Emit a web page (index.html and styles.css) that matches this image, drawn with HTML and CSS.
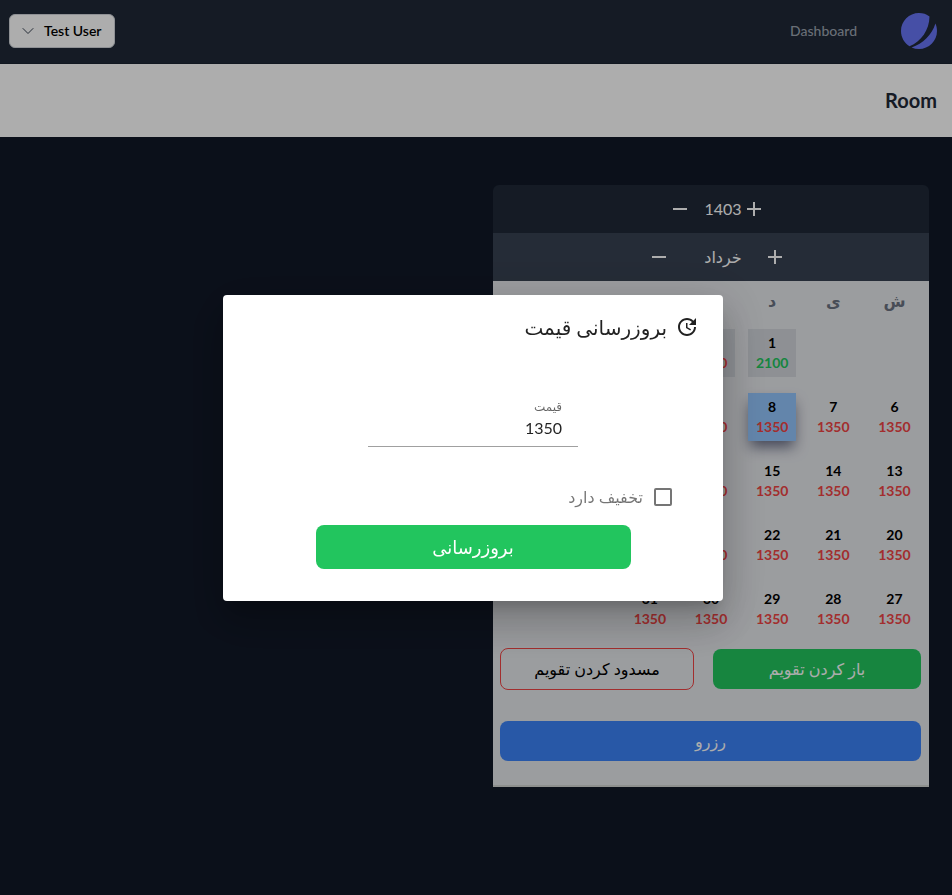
FILE: index.html
```html
<!DOCTYPE html>
<html lang="fa" dir="rtl">
<head>
<meta charset="utf-8">
<meta name="viewport" content="width=device-width, initial-scale=1">
<title>Room</title>
<link rel="stylesheet" href="styles.css">
</head>
<body>
<nav class="nav">
  <div class="nav-links">
    <a href="#" class="logo" aria-label="Home">
      <svg viewBox="0 0 48 48" width="36" height="36" fill="#6875f5"><path d="M11.395 44.428C4.557 40.198 0 32.632 0 24 0 10.745 10.745 0 24 0a23.891 23.891 0 0113.997 4.502c-.2 17.907-11.097 33.245-26.602 39.926z"/><path d="M14.134 45.885A23.914 23.914 0 0024 48c13.255 0 24-10.745 24-24 0-3.516-.756-6.856-2.115-9.866-4.659 15.143-16.608 27.092-31.75 31.751z"/></svg>
    </a>
    <a href="#" class="nav-link">Dashboard</a>
  </div>
  <button type="button" class="user-button">Test User
    <svg viewBox="0 0 24 24" width="16" height="16" fill="none" stroke="currentColor" stroke-width="1.5" stroke-linecap="round" stroke-linejoin="round"><path d="M19.5 8.25l-7.5 7.5-7.5-7.5"/></svg>
  </button>
</nav>
<header class="page-header"><h1>Room</h1></header>
<main class="content">
  <section class="calendar">
    <div class="switcher year">
      <button type="button" class="icon-button" aria-label="سال بعد"><svg viewBox="0 0 24 24" width="24" height="24"><path d="M19 13h-6v6h-2v-6H5v-2h6V5h2v6h6v2z"/></svg></button>
      <span>1403</span>
      <button type="button" class="icon-button previous" aria-label="سال قبل"><svg viewBox="0 0 24 24" width="24" height="24"><path d="M19 13H5v-2h14v2z"/></svg></button>
    </div>
    <div class="switcher month">
      <button type="button" class="icon-button" aria-label="ماه بعد"><svg viewBox="0 0 24 24" width="24" height="24"><path d="M19 13h-6v6h-2v-6H5v-2h6V5h2v6h6v2z"/></svg></button>
      <span class="month-name">خرداد</span>
      <button type="button" class="icon-button previous" aria-label="ماه قبل"><svg viewBox="0 0 24 24" width="24" height="24"><path d="M19 13H5v-2h14v2z"/></svg></button>
    </div>
    <div class="calendar-body">
      <table class="days">
        <thead><tr><th>ش</th><th>ی</th><th>د</th><th>س</th><th>چ</th><th>پ</th><th>ج</th></tr></thead>
        <tbody>
          <tr><td></td><td></td>
            <td><button type="button" class="day past">1<span class="price open">2100</span></button></td>
            <td><button type="button" class="day past">2<span class="price">1350</span></button></td>
            <td><button type="button" class="day past">3<span class="price">1350</span></button></td>
            <td><button type="button" class="day past">4<span class="price">1350</span></button></td>
            <td><button type="button" class="day past">5<span class="price">1350</span></button></td></tr>
          <tr><td><button type="button" class="day">6<span class="price">1350</span></button></td>
            <td><button type="button" class="day">7<span class="price">1350</span></button></td>
            <td><button type="button" class="day selected">8<span class="price">1350</span></button></td>
            <td><button type="button" class="day">9<span class="price">1350</span></button></td>
            <td><button type="button" class="day">10<span class="price">1350</span></button></td>
            <td><button type="button" class="day">11<span class="price">1350</span></button></td>
            <td><button type="button" class="day">12<span class="price">1350</span></button></td></tr>
          <tr><td><button type="button" class="day">13<span class="price">1350</span></button></td>
            <td><button type="button" class="day">14<span class="price">1350</span></button></td>
            <td><button type="button" class="day">15<span class="price">1350</span></button></td>
            <td><button type="button" class="day">16<span class="price">1350</span></button></td>
            <td><button type="button" class="day">17<span class="price">1350</span></button></td>
            <td><button type="button" class="day">18<span class="price">1350</span></button></td>
            <td><button type="button" class="day">19<span class="price">1350</span></button></td></tr>
          <tr><td><button type="button" class="day">20<span class="price">1350</span></button></td>
            <td><button type="button" class="day">21<span class="price">1350</span></button></td>
            <td><button type="button" class="day">22<span class="price">1350</span></button></td>
            <td><button type="button" class="day">23<span class="price">1350</span></button></td>
            <td><button type="button" class="day">24<span class="price">1350</span></button></td>
            <td><button type="button" class="day">25<span class="price">1350</span></button></td>
            <td><button type="button" class="day">26<span class="price">1350</span></button></td></tr>
          <tr><td><button type="button" class="day">27<span class="price">1350</span></button></td>
            <td><button type="button" class="day">28<span class="price">1350</span></button></td>
            <td><button type="button" class="day">29<span class="price">1350</span></button></td>
            <td><button type="button" class="day">30<span class="price">1350</span></button></td>
            <td><button type="button" class="day">31<span class="price">1350</span></button></td>
            <td></td><td></td></tr>
        </tbody>
      </table>
      <div class="actions">
        <button type="button" class="action open-action">باز کردن تقویم</button>
        <button type="button" class="action block-action">مسدود کردن تقویم</button>
        <button type="button" class="action reserve-action">رزرو</button>
      </div>
    </div>
  </section>
</main>
<div class="backdrop">
  <form class="dialog" role="dialog" aria-modal="true" aria-labelledby="dialog-title">
    <div class="dialog-heading">
      <svg viewBox="0 0 24 24" width="24" height="24" fill="currentColor"><path d="M11 8v5l4.25 2.52.77-1.28-3.52-2.09V8zm10 2V3l-2.64 2.64C16.74 4.01 14.49 3 12 3c-4.97 0-9 4.03-9 9s4.03 9 9 9 9-4.03 9-9h-2c0 3.86-3.14 7-7 7s-7-3.14-7-7 3.14-7 7-7c1.93 0 3.68.79 4.95 2.05L14 10h7z"/></svg>
      <h2 id="dialog-title">بروزرسانی قیمت</h2>
    </div>
    <div class="field">
      <label for="price">قیمت</label>
      <input id="price" type="text" inputmode="numeric" value="1350">
    </div>
    <div class="check">
      <input id="discount" type="checkbox">
      <label for="discount">تخفیف دارد</label>
    </div>
    <button type="button" class="submit">بروزرسانی</button>
  </form>
</div>
</body>
</html>
```

FILE: styles.css
```css
*, *::before, *::after { box-sizing: border-box; }

body {
  margin: 0;
  min-height: 100vh;
  background: #111827;
  font-family: Lato, "DejaVu Sans", sans-serif;
  font-size: 16px;
  line-height: 24px;
}

button, input { font: inherit; }
button { cursor: pointer; }
svg { display: block; }
h1, h2 { margin: 0; }

.nav {
  display: flex;
  justify-content: space-between;
  align-items: center;
  height: 64px;
  padding: 0 15px 2px 9px;
  background: #1f2937;
  border-bottom: 1px solid #1a2230;
}
.nav-links { display: flex; align-items: center; gap: 44px; }
.nav-link {
  color: #9ca3af;
  font-size: 14px;
  font-weight: 500;
  line-height: 20px;
  text-decoration: none;
}
.user-button {
  display: flex;
  align-items: center;
  gap: 8px;
  padding: 6px 12px 6px 10px;
  border: 1px solid #d1d5db;
  border-radius: 6px;
  background: #fff;
  color: #000;
  font-size: 14px;
  font-weight: 600;
  line-height: 20px;
}
.user-button svg { color: #374151; }

.page-header { padding: 24px 15px; background: #fff; }
.page-header h1 {
  color: #1f2937;
  font-size: 20px;
  font-weight: 700;
  line-height: 25px;
}

.content {
  display: grid;
  grid-template-columns: 1fr 1fr;
  gap: 32px;
  padding: 48px 23px 48px 25px;
}
.calendar {
  overflow: hidden;
  border-radius: 6px 6px 0 0;
  border-bottom: 2px solid #d1d5d1;
}
.switcher {
  display: flex;
  justify-content: center;
  align-items: center;
  height: 48px;
  color: #fff;
}
.year { background: #1f2937; }
.month { background: #374151; }
.month-name { width: 80px; text-align: center; }
.icon-button {
  padding: 0;
  border: 0;
  background: none;
  color: inherit;
}
.icon-button svg { fill: currentColor; }
.previous { margin: 0 12px; }

.calendar-body { background: #e5e7eb; padding: 0 4px 24px; }
.days {
  width: 100%;
  table-layout: fixed;
  border-collapse: collapse;
}
.days th {
  height: 40px;
  padding: 0;
  color: #6b7280;
  font-weight: 700;
}
.days td { height: 64px; padding: 0; }
.day {
  display: block;
  width: 48px;
  height: 48px;
  margin: 0 auto;
  padding: 4px 0;
  border: 0;
  background: none;
  color: #000;
  font-size: 14px;
  font-weight: 700;
  line-height: 20px;
}
.price { display: block; color: #ef4444; }
.open { color: #22c55e; }
.past { background: #d1d5db; }
.selected {
  background: #93c5fd;
  box-shadow: 0 8px 14px -2px rgba(17, 24, 60, .6);
}

.actions {
  display: grid;
  grid-template-columns: 208px 1fr;
  align-items: center;
  gap: 31px 19px;
  padding: 7px 4px 0 3px;
}
.action {
  height: 40px;
  padding: 0 16px;
  border: 0;
  border-radius: 8px;
  color: #fff;
}
.open-action { background: #22c55e; }
.block-action {
  height: 42px;
  border: 1px solid #ef4444;
  background: none;
  color: #000;
}
.reserve-action { grid-column: 1 / -1; background: #3b82f6; }

.backdrop {
  position: fixed;
  inset: 0;
  display: flex;
  justify-content: center;
  align-items: center;
  padding-right: 6px;
  background: rgba(0, 0, 0, .32);
}
.dialog {
  display: flex;
  flex-direction: column;
  width: 500px;
  max-width: 80vw;
  padding: 16px 24px 32px;
  border-radius: 4px;
  background: #fff;
  color: rgba(0, 0, 0, .87);
  box-shadow: 0 11px 15px -7px rgba(0, 0, 0, .2), 0 24px 38px 3px rgba(0, 0, 0, .14), 0 9px 46px 8px rgba(0, 0, 0, .12);
}
.dialog-heading { display: flex; align-items: center; gap: 8px; height: 32px; }
.dialog-heading h2 { font-size: 20px; font-weight: 500; line-height: 32px; }
.field {
  align-self: center;
  width: 210px;
  margin-top: 55px;
  padding: 0 16px 6px;
  border-bottom: 1px solid #a0a0a0;
}
.field label {
  display: block;
  color: rgba(0, 0, 0, .6);
  font-size: 12px;
  line-height: 18px;
}
.field input {
  display: block;
  width: 100%;
  height: 24px;
  padding: 0;
  border: 0;
  outline: 0;
  background: none;
  color: inherit;
}
.check {
  display: flex;
  align-items: center;
  gap: 11px;
  margin: 38px 27px 16px;
  color: rgba(0, 0, 0, .54);
}
.check input {
  appearance: none;
  width: 18px;
  height: 18px;
  margin: 0;
  border: 2px solid #757575;
  border-radius: 2px;
}
.submit {
  align-self: center;
  width: 315px;
  height: 44px;
  border: 0;
  border-radius: 8px;
  background: #22c55e;
  color: #fff;
  font-size: 18px;
}
```
